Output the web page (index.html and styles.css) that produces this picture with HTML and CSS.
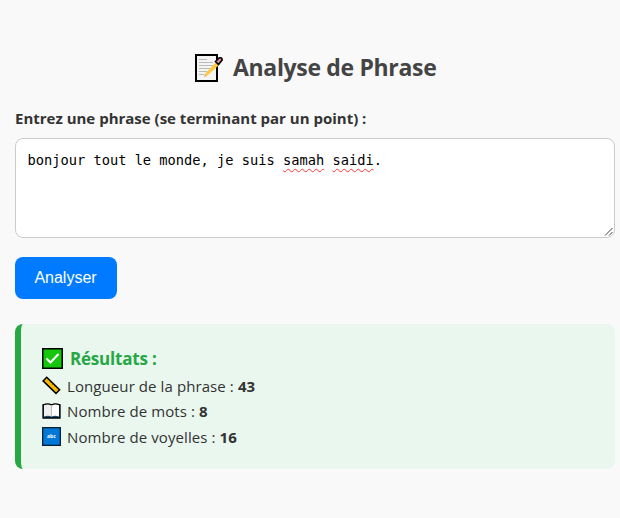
FILE: index.html
```html
<!DOCTYPE html>
<html lang="fr">
<head>
<meta charset="utf-8">
<title>Analyse de Phrase</title>
<link rel="stylesheet" href="styles.css">
</head>
<body>
<main class="page">
  <h1 class="title">
    <svg class="icon-memo" width="28" height="28" viewBox="0 0 28 28">
      <path d="M1 1H22V27H1Z" fill="#f4f4f4" stroke="#000" stroke-width="2"/>
      <path d="M4 5.5H12M4 8.5H18M4 11.5H18M4 14.5H15M4 17.5H12M4 20.5H9" stroke="#bbb" stroke-width="1"/>
      <path d="M10 20L21 8L24 11L13 21L9 23Z" fill="#ffc83d"/>
      <path d="M9 23L10 20L12 22Z" fill="#e8b58a"/>
      <path d="M20.5 7.5L24 4Q27 3 27.2 6L23.5 10.5Z" fill="#d98a94" stroke="#000" stroke-width="1.6"/>
    </svg>
    <span class="title-text">Analyse de Phrase</span>
  </h1>
  <div class="label"><span>Entrez une phrase (se terminant par un point) :</span></div>
  <div class="field">bonjour tout le monde, je suis <span class="typo">samah</span> <span class="typo">saidi</span>.<svg class="grip" width="10" height="10" viewBox="0 0 10 10"><path d="M1 8.5L8.5 1M5 8.5L8.5 5" fill="none" stroke="#444" stroke-width="1"/></svg></div>
  <button class="button">Analyser</button>
  <section class="results">
    <h2 class="results-title">
      <svg width="21" height="21" viewBox="0 0 21 21"><rect x=".75" y=".75" width="19.5" height="19.5" fill="#16c60c" stroke="#000" stroke-width="1.5"/><path d="M4.5 10.5L8.5 14.5L16.5 6" fill="none" stroke="#fff" stroke-width="2"/></svg>
      <span>Résultats :</span>
    </h2>
    <p class="row">
      <svg width="19" height="19" viewBox="0 0 19 19"><path d="M4.7 1.2L17.6 13.7L14 17.4L1.1 4.9Z" fill="#ffb900" stroke="#000" stroke-width="1.5"/><path d="M6.8 3.5L5.9 4.5M9 5.7L8 6.7M11.3 7.8L10.3 8.9M13.5 10L12.5 11.1M15.6 12.2L14.8 13.2" stroke="#513900" stroke-width=".8"/></svg>
      <span>Longueur de la phrase : <b>43</b></span>
    </p>
    <p class="row">
      <svg width="19" height="19" viewBox="0 0 19 19"><path d="M1 3H18V16H1Z" fill="#134b73" stroke="#000" stroke-width="1.3"/><path d="M2 3Q6 1 9.5 3V14.5Q6 13 2 14.5Z" fill="#eee"/><path d="M9.5 3Q13 1 17 3V14.5Q13 13 9.5 14.5Z" fill="#fff"/><path d="M1 3Q6 .8 9.5 3Q13 .8 18 3" fill="none" stroke="#000" stroke-width="1.2"/><path d="M9.5 3V14.5" stroke="#bbb" stroke-width=".8"/></svg>
      <span>Nombre de mots : <b>8</b></span>
    </p>
    <p class="row">
      <svg width="19" height="19" viewBox="0 0 19 19"><rect x=".65" y=".65" width="17.7" height="17.7" fill="#0078d7" stroke="#0b2033" stroke-width="1.3"/><text class="abc" x="9.5" y="11.4" text-anchor="middle">abc</text></svg>
      <span>Nombre de voyelles : <b>16</b></span>
    </p>
  </section>
</main>
</body>
</html>
```
FILE: styles.css
```css
* { box-sizing: border-box; }
body {
  margin: 0;
  background: #f9f9f9;
  color: #333;
  font-family: "Open Sans", "Noto Sans", sans-serif;
  font-size: 15px;
}
.page { padding: 50px 5px 0 15px; }
.title {
  display: flex;
  align-items: center;
  margin: 0 0 0 180px;
  height: 36px;
  gap: 10px;
  color: #444;
  font-size: 23px;
  font-weight: 700;
  white-space: nowrap;
}
.icon-memo { flex: none; }
.title-text { padding-bottom: 2px; letter-spacing: -0.33px; }
.label {
  height: 22px;
  margin: 21px 0 9px;
  font-weight: 700;
  line-height: 22px;
  white-space: nowrap;
}
.field {
  position: relative;
  height: 100px;
  padding: 11px 12px 12px 11.5px;
  border: 1px solid #ccc;
  border-radius: 8px;
  background: #fff;
  color: #000;
  font: 13.7px/20px "DejaVu Sans Mono", monospace;
  white-space: pre;
}
.typo {
  text-decoration: underline wavy #f33 1.3px;
  text-decoration-skip-ink: none;
  text-underline-offset: 3px;
}
.grip { position: absolute; right: 0; bottom: 0; }
.button {
  display: block;
  width: 102px;
  height: 42px;
  margin: 19px 0 25px;
  padding: 0 1px 0 0;
  border: 0;
  border-radius: 8px;
  background: #007bff;
  color: #fff;
  font: 16px "Liberation Sans", sans-serif;
}
.results {
  height: 145px;
  padding: 21px;
  border-left: 6px solid #28a745;
  border-radius: 8px;
  background: #e9f7ef;
}
.results-title {
  display: flex;
  align-items: center;
  gap: 7px;
  height: 27px;
  margin: 0 0 1px;
  color: #28a745;
  font-size: 17px;
  font-weight: 700;
  letter-spacing: -0.2px;
}
.row {
  display: flex;
  align-items: center;
  gap: 6px;
  height: 25.5px;
  margin: 0;
  letter-spacing: 0.09px;
  white-space: nowrap;
}
.abc { fill: #fff; font: bold 5px "Open Sans", sans-serif; }
```
